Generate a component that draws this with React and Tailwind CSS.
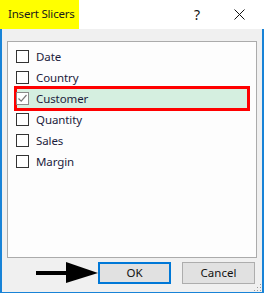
import React from "react";

const items = ["Date", "Country", "Customer", "Quantity", "Sales", "Margin"];

function Box({ checked }) {
  return (
    <div
      className={
        "w-[13px] h-[13px] shrink-0 border bg-white flex items-center justify-center " +
        (checked ? "border-[#8a8a8a] -ml-[1px]" : "border-[#333333]")
      }
    >
      {checked && (
        <svg width="11" height="11" viewBox="0 0 11 11">
          <path d="M1.5 5.5 L4.2 8.2 L9.5 2" fill="none" stroke="#7a7a7a" strokeWidth="1.2" />
        </svg>
      )}
    </div>
  );
}

export default function App() {
  return (
    <div
      className="w-[264px] h-[293px] flex flex-col bg-[#f0f0f0] text-[11.5px] text-[#1c1c3c] whitespace-nowrap"
      style={{ fontFamily: '"Noto Sans", "Open Sans", sans-serif' }}
    >
      <div className="h-[29px] shrink-0 bg-white flex items-stretch">
        <div className="w-[79px] bg-[#ffff00] flex items-center pl-[8px] pb-[1px] text-[#1a1a1a] text-[11.5px] tracking-[-0.2px]">
          Insert Slicers
        </div>
        <div className="flex-1" />
        <div className="flex items-center pr-[19px] gap-[34px] text-[#111]">
          <span className="text-[14px] leading-none">?</span>
          <svg width="11" height="11" viewBox="0 0 11 11">
            <path d="M0.5 0.5 L10.5 10.5 M10.5 0.5 L0.5 10.5" stroke="#111" strokeWidth="1" />
          </svg>
        </div>
      </div>
      <div className="flex-1 flex flex-col border-l-2 border-r-2 border-b border-[#1883d7] pl-[5px] pr-[5px] pt-[12px] relative">
        <div className="w-[250px] h-[217px] border border-[#ababab] bg-[#fdfdfd] pt-[4px] flex flex-col">
          {items.map((it) =>
            it === "Customer" ? (
              <div
                key={it}
                className="h-[25px] -my-[2px] ml-[6px] w-[236px] border-[3px] border-[#ff0000] bg-[#d5efe0] flex items-center gap-[7px] relative"
              >
                <Box checked />
                <span className="tracking-[-0.1px]">{it}</span>
              </div>
            ) : (
              <div key={it} className="h-[21px] pl-[8px] flex items-center gap-[7px]">
                <Box />
                <span className="tracking-[-0.1px]">{it}</span>
              </div>
            )
          )}
        </div>
        <div className="flex items-center mt-[4px] h-[22px]">
          <svg width="62" height="22" viewBox="0 0 62 22" className="ml-[29px]">
            <rect x="0" y="9" width="33" height="4" fill="#000" />
            <polygon points="30,0 62,11 30,21" fill="#000" />
          </svg>
          <button className="w-[73px] h-[22px] border-2 border-[#0078d7] bg-[#e1e1e1] flex items-center justify-center text-[#111]">
            OK
          </button>
          <button className="ml-[11px] w-[73px] h-[22px] border border-[#adadad] bg-[#e1e1e1] flex items-center justify-center text-[#111]">
            Cancel
          </button>
        </div>
        <svg width="8" height="8" viewBox="0 0 8 8" className="absolute right-[0px] bottom-[0px]">
          <rect x="6" y="0" width="1" height="1" fill="#999" />
          <rect x="3" y="3" width="1" height="1" fill="#999" />
          <rect x="6" y="3" width="1" height="1" fill="#999" />
          <rect x="0" y="6" width="1" height="1" fill="#999" />
          <rect x="3" y="6" width="1" height="1" fill="#999" />
          <rect x="6" y="6" width="1" height="1" fill="#999" />
        </svg>
      </div>
    </div>
  );
}
